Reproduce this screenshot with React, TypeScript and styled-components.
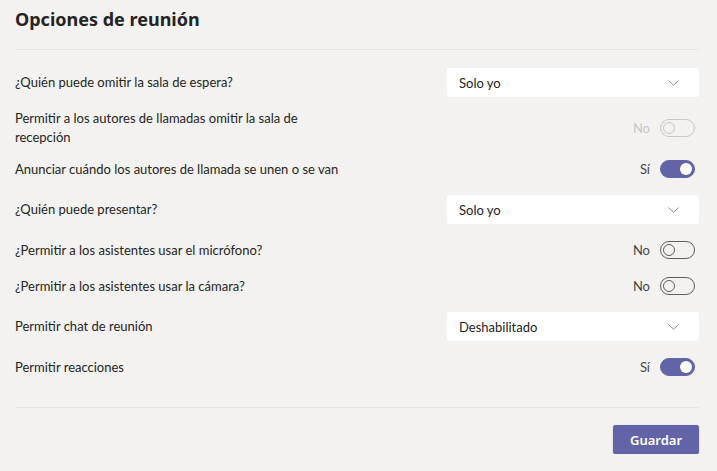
import styled, { createGlobalStyle } from 'styled-components';

const GlobalStyle = createGlobalStyle`
  body {
    margin: 0;
    background: #f3f2f1;
    font-family: Lato, 'Liberation Sans', sans-serif;
    color: #252423;
  }
`;

type Option =
  | { label: string; kind: 'select'; value: string; tight?: boolean }
  | { label: string; kind: 'toggle'; on: boolean; disabled?: boolean; tight?: boolean };

const options: Option[] = [
  { label: '¿Quién puede omitir la sala de espera?', kind: 'select', value: 'Solo yo' },
  {
    label: 'Permitir a los autores de llamadas omitir la sala de recepción',
    kind: 'toggle',
    on: false,
    disabled: true,
    tight: true,
  },
  { label: 'Anunciar cuándo los autores de llamada se unen o se van', kind: 'toggle', on: true },
  { label: '¿Quién puede presentar?', kind: 'select', value: 'Solo yo' },
  { label: '¿Permitir a los asistentes usar el micrófono?', kind: 'toggle', on: false },
  { label: '¿Permitir a los asistentes usar la cámara?', kind: 'toggle', on: false },
  { label: 'Permitir chat de reunión', kind: 'select', value: 'Deshabilitado' },
  { label: 'Permitir reacciones', kind: 'toggle', on: true },
];

const App = () => {
  return (
    <Page>
      <GlobalStyle />
      <Header>
        <Title>Opciones de reunión</Title>
      </Header>
      <List>
        {options.map((o) => (
          <Row key={o.label} $tight={o.tight}>
            <Label>{o.label}</Label>
            {o.kind === 'select' ? (
              <Select>
                <span>{o.value}</span>
                <svg width='11' height='6' viewBox='0 0 11 6'>
                  <path d='M0.5 0.5 L5.5 5.2 L10.5 0.5' fill='none' stroke='#8a8886' strokeWidth='1' />
                </svg>
              </Select>
            ) : (
              <ToggleWrap>
                <ToggleText $disabled={o.disabled}>{o.on ? 'Sí' : 'No'}</ToggleText>
                <Track $on={o.on} $disabled={o.disabled}>
                  <Knob $on={o.on} $disabled={o.disabled} />
                </Track>
              </ToggleWrap>
            )}
          </Row>
        ))}
      </List>
      <Footer>
        <SaveButton>Guardar</SaveButton>
      </Footer>
    </Page>
  );
};

const Page = styled.div`
  padding: 0 18px 0 15px;
`;

const Header = styled.header`
  border-bottom: 1px solid #e6e4e2;
  padding: 7px 0 18px;
`;

const Title = styled.h1`
  margin: 0;
  font-family: 'Noto Sans', sans-serif;
  font-size: 18px;
  line-height: 24px;
  font-weight: 700;
  color: #252423;
`;

const List = styled.div`
  display: flex;
  flex-direction: column;
  gap: 16px;
  padding: 18px 0 30px;
  border-bottom: 1px solid #e6e4e2;
`;

const Row = styled.div<{ $tight?: boolean }>`
  display: flex;
  align-items: center;
  justify-content: space-between;
  min-height: 20px;
  margin: ${(p) => (p.$tight ? '-4px 0 -4px' : '0')};
`;

const Label = styled.div`
  font-size: 13px;
  line-height: 19px;
  max-width: 340px;
`;

const Select = styled.div`
  width: 252px;
  height: 29px;
  box-sizing: border-box;
  background: #fff;
  border-radius: 3px;
  display: flex;
  align-items: center;
  justify-content: space-between;
  padding: 0 20px 0 12px;
  font-size: 13px;
`;

const ToggleWrap = styled.div`
  display: flex;
  align-items: center;
  gap: 10px;
  padding-right: 4px;
`;

const ToggleText = styled.span<{ $disabled?: boolean }>`
  font-size: 13px;
  color: ${(p) => (p.$disabled ? '#c8c6c4' : '#484644')};
`;

const Track = styled.div<{ $on: boolean; $disabled?: boolean }>`
  width: 35px;
  height: 18px;
  box-sizing: border-box;
  border-radius: 9px;
  border: 1px solid
    ${(p) => (p.$on ? '#6264a7' : p.$disabled ? '#c8c6c4' : '#605e5c')};
  background: ${(p) => (p.$on ? '#6264a7' : 'transparent')};
  display: flex;
  align-items: center;
  justify-content: ${(p) => (p.$on ? 'flex-end' : 'flex-start')};
  padding: 0 2px;
`;

const Knob = styled.div<{ $on: boolean; $disabled?: boolean }>`
  width: 12px;
  height: 12px;
  box-sizing: border-box;
  border-radius: 50%;
  background: ${(p) => (p.$on ? '#fff' : 'transparent')};
  border: ${(p) =>
    p.$on ? 'none' : `1px solid ${p.$disabled ? '#c8c6c4' : '#605e5c'}`};
`;

const Footer = styled.div`
  display: flex;
  justify-content: flex-end;
  padding-top: 17px;
`;

const SaveButton = styled.button`
  width: 86px;
  height: 29px;
  border: none;
  border-radius: 2px;
  background: #6264a7;
  color: #fff;
  font-family: 'Noto Sans', 'Open Sans', sans-serif;
  font-size: 13px;
  font-weight: 600;
  box-shadow: 0 1px 2px rgba(0, 0, 0, 0.2);
`;

export default App;
